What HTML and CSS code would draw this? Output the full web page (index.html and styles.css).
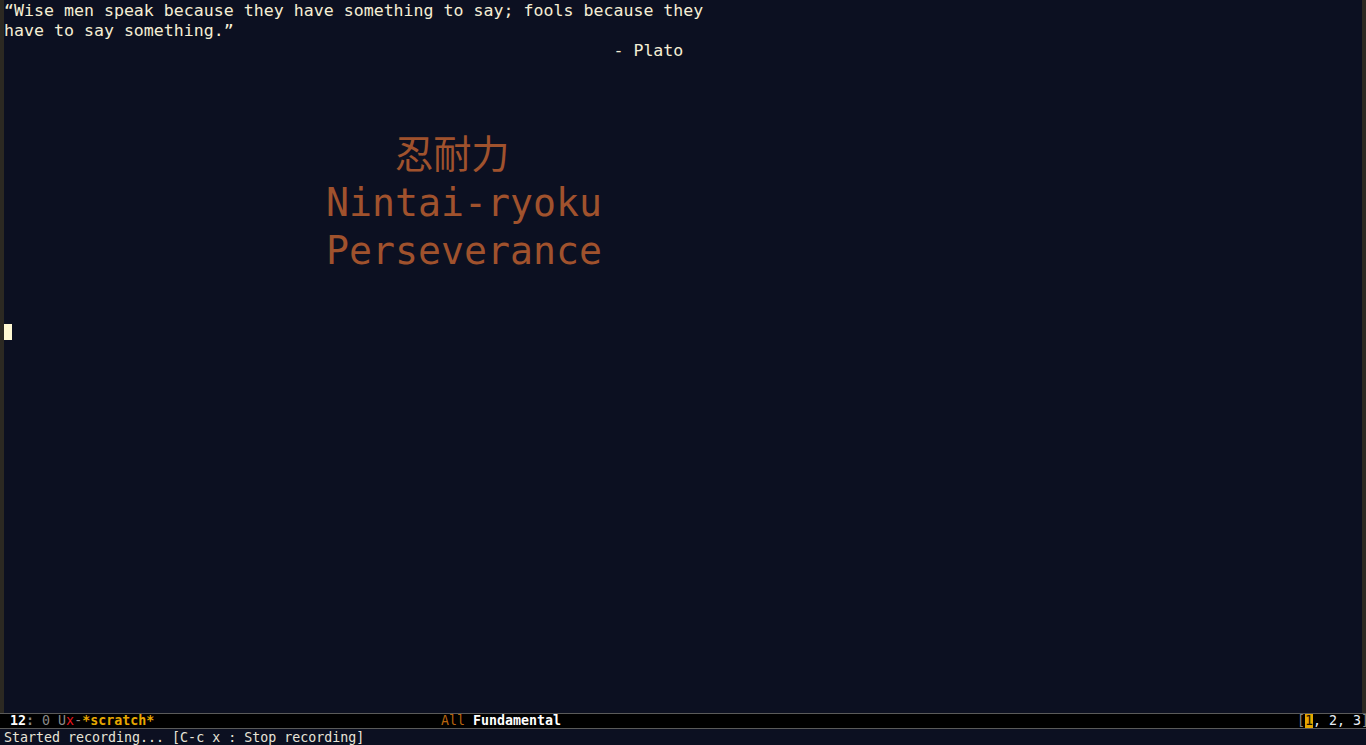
FILE: index.html
```html
<!DOCTYPE html>
<html lang="en">
<head>
<meta charset="utf-8">
<title>Emacs *scratch*</title>
<link rel="stylesheet" href="styles.css">
</head>
<body>
<div class="frame">
  <div class="window">
    <div class="fringe"></div>
    <div class="buffer">
      <div class="quote">“Wise men speak because they have something to say; fools because they
have to say something.”
                                                             - Plato</div>
      <div class="banner"><div class="line">   忍耐力</div><div class="line">Nintai-ryoku</div><div class="line">Perseverance</div></div>
      <div class="cursor-line"><span class="cursor"></span></div>
    </div>
    <div class="fringe"></div>
  </div>
  <div class="modeline">
    <div class="ml-left"> <b class="w">12</b><b class="g">:</b> <span class="g">0</span> <span class="g">U</span><span class="red">x</span><span class="g">-</span><b class="gold">*scratch*</b></div>
    <div class="ml-mid"><span class="orange">All</span> <b class="w">Fundamental</b></div>
    <div class="ml-right"><span class="g">[</span><span class="hl">1</span><span class="w2">, 2, 3</span><span class="g">]</span></div>
  </div>
  <div class="echo">Started recording... [C-c x : Stop recording]</div>
</div>
</body>
</html>
```
FILE: styles.css
```css
html, body {
  margin: 0;
  padding: 0;
  background: #0c1021;
  overflow: hidden;
}
.frame {
  width: 1366px;
  height: 745px;
  display: flex;
  flex-direction: column;
  font-family: "DejaVu Sans Mono", "Noto Sans CJK JP", monospace;
  color: #f5eed5;
}
.window {
  flex: 1;
  display: flex;
  min-height: 0;
}
.fringe {
  width: 4px;
  background: #2c2922;
  flex: none;
}
.buffer {
  flex: 1;
  overflow: hidden;
}
.quote {
  white-space: pre;
  font-size: 16.6px;
  line-height: 20px;
  padding-top: 1px;
}
.banner {
  margin-top: 70px;
  padding-left: 322px;
  color: #a0522d;
  font-size: 38.2px;
  line-height: 48px;
}
.banner .line {
  white-space: pre;
}
.cursor-line {
  margin-top: 49px;
  height: 16px;
}
.cursor {
  display: block;
  width: 8px;
  height: 16px;
  background: #fff8d2;
}
.modeline {
  height: 14px;
  background: #000;
  border-top: 1px solid #5a5a5a;
  border-bottom: 1px solid #5a5a5a;
  display: flex;
  font-size: 13.3px;
  line-height: 14px;
  white-space: pre;
  overflow: hidden;
}
.ml-left {
  padding-left: 2px;
  width: 439px;
  flex: none;
}
.ml-mid {
  flex: 1;
}
.ml-right {
  flex: none;
  width: 69px;
  overflow: hidden;
}
.w { color: #ffffff; }
.w2 { color: #e8eef8; }
.g { color: #8a8a8a; }
.red { color: #e8141c; }
.gold { color: #e6a700; }
.orange { color: #b8640e; }
.hl { background: #e6a700; color: #1a1000; }
b { font-weight: bold; }
.echo {
  height: 16px;
  font-size: 13.3px;
  line-height: 17px;
  padding-left: 4px;
  color: #e8e4d8;
  white-space: pre;
}
```
